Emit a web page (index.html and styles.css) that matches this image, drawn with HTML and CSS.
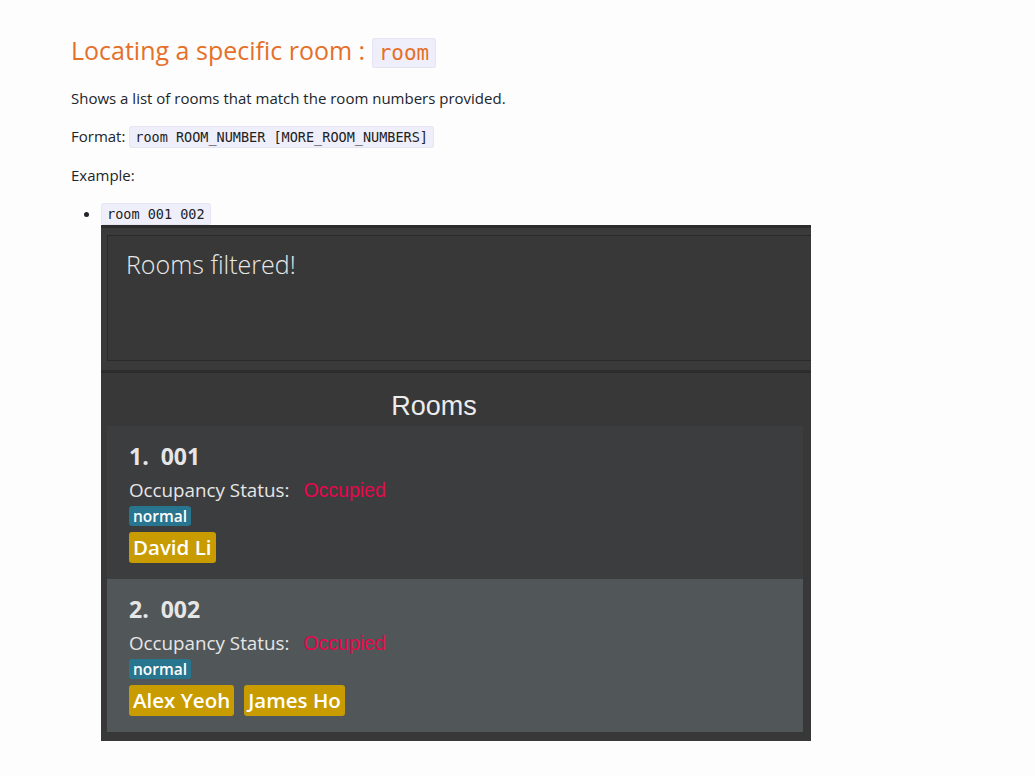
FILE: index.html
```html
<!DOCTYPE html>
<html>
<head>
<meta charset="utf-8">
<link rel="stylesheet" href="styles.css">
</head>
<body>
<main class="doc">
  <h3 class="title">Locating a specific room : <code class="title-code">room</code></h3>
  <p class="para">Shows a list of rooms that match the room numbers provided.</p>
  <p class="para">Format: <code class="inline">room ROOM_NUMBER [MORE_ROOM_NUMBERS]</code></p>
  <p class="para">Example:</p>
  <ul class="list">
    <li class="item">
      <code class="inline">room 001 002</code>
      <div class="shot">
        <div class="result-wrap">
          <div class="result-box">Rooms filtered!</div>
        </div>
        <div class="divider"></div>
        <div class="panel">
          <div class="panel-title">Rooms</div>
          <div class="card card-odd">
            <div class="room-name">1.&nbsp; 001</div>
            <div class="status"><span class="status-label">Occupancy Status:</span><span class="status-val">Occupied</span></div>
            <div class="tags tags-type"><span class="tag tag-type">normal</span></div>
            <div class="tags"><span class="tag tag-person">David Li</span></div>
          </div>
          <div class="card card-even">
            <div class="room-name">2.&nbsp; 002</div>
            <div class="status"><span class="status-label">Occupancy Status:</span><span class="status-val">Occupied</span></div>
            <div class="tags tags-type"><span class="tag tag-type">normal</span></div>
            <div class="tags"><span class="tag tag-person">Alex Yeoh</span><span class="tag tag-person">James Ho</span></div>
          </div>
        </div>
      </div>
    </li>
  </ul>
</main>
</body>
</html>
```

FILE: styles.css
```css
html, body {
  margin: 0;
  padding: 0;
  background: #fdfdfe;
}
.doc {
  padding: 32px 0 0 71px;
  font-family: "Open Sans", "Noto Sans", sans-serif;
  font-size: 15px;
  color: #212529;
}
.title {
  margin: 0 0 16px 0;
  font-size: 25px;
  font-weight: 400;
  color: #e5702a;
  line-height: 36px;
}
.title-code {
  font-family: "DejaVu Sans Mono", monospace;
  font-size: 21px;
  background: #efeffb;
  border: 1px solid #e4e4f2;
  border-radius: 3px;
  padding: 2px 6px;
  color: #e5702a;
}
.para {
  margin: 0 0 16px 0;
  line-height: 22px;
}
.inline {
  font-family: "DejaVu Sans Mono", monospace;
  font-size: 13.5px;
  background: #efeffb;
  border: 1px solid #e6e6f3;
  border-radius: 3px;
  padding: 2px 5px;
  color: #222;
}
.list {
  margin: 0;
  padding-left: 30px;
}
.item {
  line-height: 22px;
}
.shot {
  width: 710px;
  height: 516px;
  background: #383838;
  border-top: 3px solid #2c2c2c;
  box-sizing: border-box;
  display: flex;
  flex-direction: column;
  overflow: hidden;
}
.result-wrap {
  padding: 7px 0 9px 6px;
  background: #3a3a3a;
}
.result-box {
  height: 126px;
  border: 1px solid #2a2a2a;
  border-right: none;
  background: #383838;
  box-sizing: border-box;
  padding: 12px 0 0 18px;
  font-family: "Open Sans", sans-serif;
  font-size: 25px;
  font-weight: 300;
  color: #e8e8e8;
  line-height: 32px;
}
.divider {
  height: 3px;
  background: #2d2d2d;
}
.panel {
  flex: 1;
  background: #383838;
  padding: 0 8px 0 6px;
}
.panel-title {
  text-align: center;
  padding-right: 42px;
  font-family: "Liberation Sans", Arial, sans-serif;
  font-size: 27px;
  color: #ececec;
  height: 53px;
  line-height: 66px;
}
.card {
  height: 153px;
  box-sizing: border-box;
  padding: 14px 0 0 22px;
  font-family: "Open Sans", sans-serif;
  color: #e6e6e6;
}
.card-odd {
  background: #3c3d3f;
}
.card-even {
  background: #515658;
}
.room-name {
  font-size: 23px;
  font-weight: 700;
  line-height: 33px;
}
.status {
  margin-top: 2px;
  font-size: 18.8px;
  line-height: 30px;
  margin-bottom: 1px;
}
.status-label {
  margin-right: 14px;
}
.status-val {
  font-family: "Liberation Sans", Arial, sans-serif;
  color: #e8064c;
  font-size: 19.5px;
}
.tags {
  display: flex;
  gap: 10px;
}
.tags-type {
  margin-bottom: 6px;
}
.tag {
  color: #fff;
  border-radius: 3px;
}
.tag-type {
  background: #28758f;
  font-size: 15.5px;
  font-weight: 600;
  padding: 0 4px;
  line-height: 20px;
}
.tag-person {
  background: #c89c00;
  font-size: 20.5px;
  font-weight: 600;
  padding: 0 4px;
  line-height: 31px;
}
```
